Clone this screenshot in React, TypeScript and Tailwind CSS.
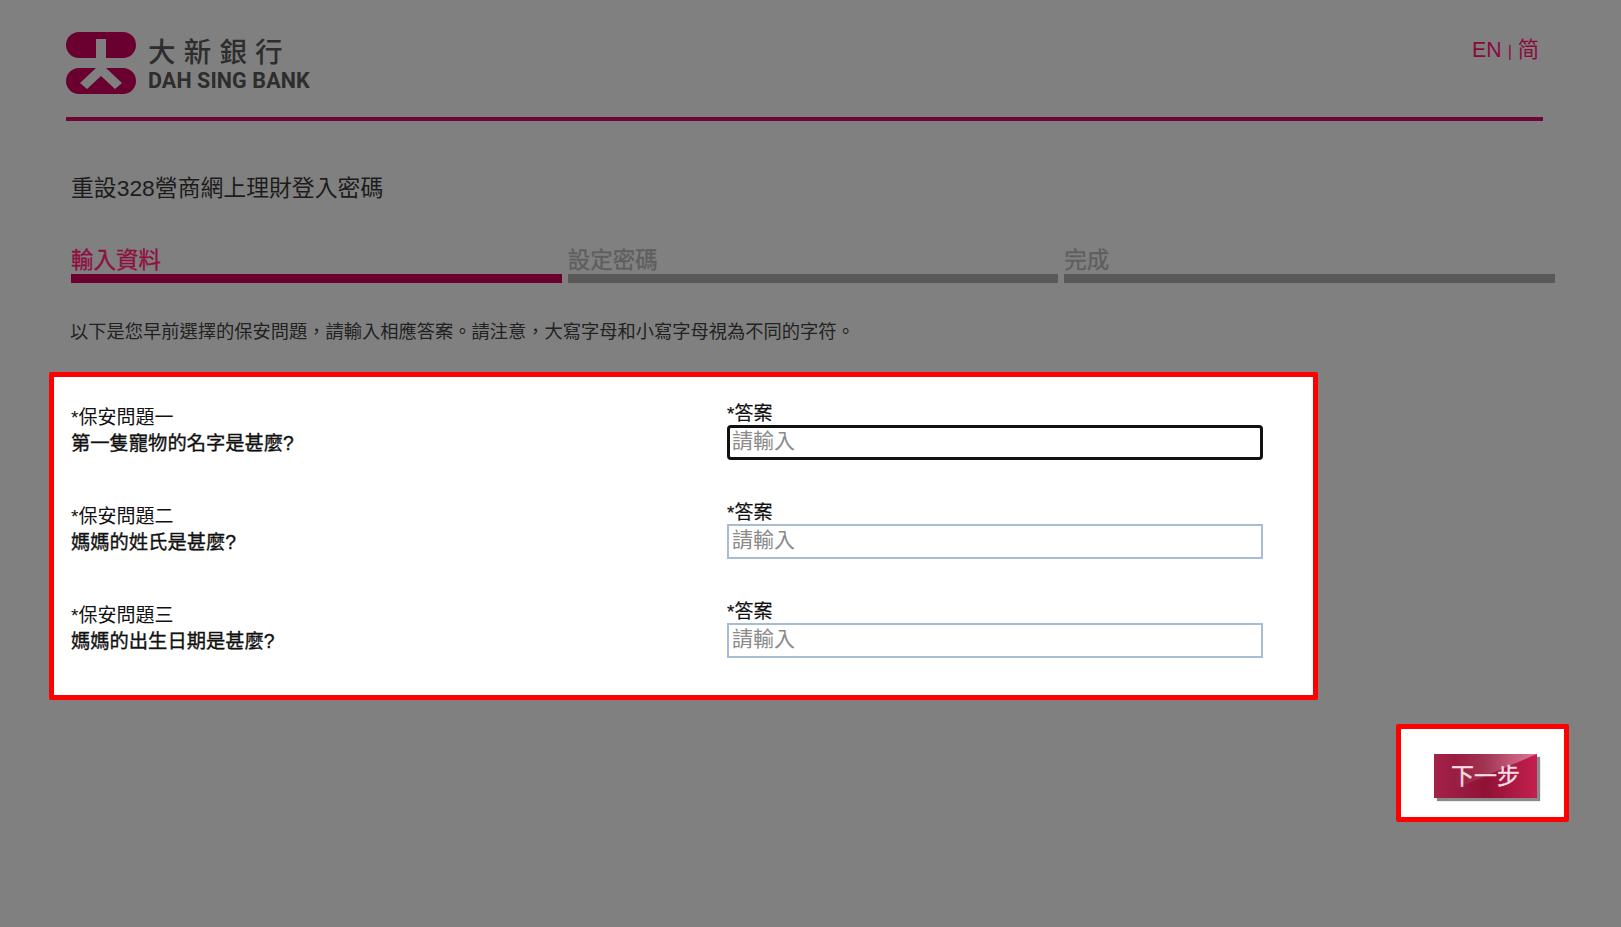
import React from 'react';

const FONT = "font-['Liberation_Sans','Noto_Sans_CJK_TC',sans-serif]";

const STEPS = [
  { label: '輸入資料', active: true },
  { label: '設定密碼', active: false },
  { label: '完成', active: false },
];

const QUESTIONS = [
  { title: '*保安問題一', question: '第一隻寵物的名字是甚麼?', focused: true },
  { title: '*保安問題二', question: '媽媽的姓氏是甚麼?', focused: false },
  { title: '*保安問題三', question: '媽媽的出生日期是甚麼?', focused: false },
];

const Logo = () => (
  <svg width="70" height="62" viewBox="0 0 70 62" className="shrink-0">
    <rect x="0" y="0" width="70" height="26" rx="13" fill="#690030" />
    <rect x="30" y="7" width="10" height="19" fill="#808080" />
    <rect x="0" y="36" width="70" height="26" rx="13" fill="#690030" />
    <polygon points="30,36 14,51 21,57 35,44 49,57 56,51 40,36" fill="#808080" />
  </svg>
);

const QuestionRow = ({ title, question, focused }: { title: string; question: string; focused: boolean }) => (
  <div className="flex h-[99px]">
    <div className="w-[656px] pt-[19px] text-[19px] leading-[26px] text-[#111]">
      <div>{title}</div>
      <div className="text-[19.3px] [-webkit-text-stroke:0.35px_#111]">{question}</div>
    </div>
    <div className="w-[536px] pt-[14px]">
      <div className="h-[25px] pt-[2px] text-[19px] leading-[24px] text-[#111] [-webkit-text-stroke:0.2px_#111]">*答案</div>
      <input
        placeholder="請輸入"
        className={`block h-[35px] w-[536px] bg-white pb-[4px] text-[21px] outline-none placeholder:text-[#8a8a8a] ${
          focused ? 'rounded-[4px] border-[3px] border-[#111] pl-[2px]' : 'border-2 border-[#a9bcd5] pl-[3px]'
        }`}
      />
    </div>
  </div>
);

export default function App() {
  return (
    <div className={`${FONT} h-[927px] w-full overflow-hidden bg-[#808080]`}>
      <header className="ml-[66px] mr-[78px] h-[121px] border-b-4 border-[#6f0535] pt-[32px]">
        <div className="flex items-start justify-between">
          <div className="flex gap-[12px]">
            <Logo />
            <div className="pt-[5px] text-[#2d2d2d]">
              <div className="text-[27.5px] font-medium leading-[32px] tracking-[8.2px]">大新銀行</div>
              <div className="font-['Roboto',sans-serif] text-[21.5px] font-bold leading-[24px] tracking-[0.1px]">DAH SING BANK</div>
            </div>
          </div>
          <div className="mr-[4px] pt-[4px] text-[21.3px] leading-[28px] text-[#8a0a3c]">
            EN <span className="text-[16px]">|</span> 简
          </div>
        </div>
      </header>

      <h1 className="ml-[71px] mt-[52px] text-[22.85px] font-normal leading-[30px] text-[#1c1c1c]">重設328營商網上理財登入密碼</h1>

      <div className="ml-[71px] mr-[66px] mt-[45px] flex gap-[6px]">
        {STEPS.map((step) => (
          <div key={step.label} className="flex-1">
            <div
              className={`text-[22.5px] leading-[26px] [-webkit-text-stroke:0.3px_currentColor] ${
                step.active ? 'text-[#8f0f40]' : 'text-[#5e5e5e]'
              }`}
            >
              {step.label}
            </div>
            <div className={`h-[9px] ${step.active ? 'bg-[#6b0030]' : 'bg-[#595959]'}`} />
          </div>
        ))}
      </div>

      <p className="ml-[70px] mt-[36px] text-[18.25px] leading-[26px] text-[#222]">
        以下是您早前選擇的保安問題，請輸入相應答案。請注意，大寫字母和小寫字母視為不同的字符。
      </p>

      <section className="ml-[49px] mt-[27px] h-[328px] w-[1269px] rounded-[2px] border-[5px] border-[#ff0000] bg-white pl-[17px] pt-[9px]">
        {QUESTIONS.map((q) => (
          <QuestionRow key={q.title} {...q} />
        ))}
      </section>

      <div className="ml-[1396px] mt-[24px] flex h-[98px] w-[173px] items-start rounded-[2px] border-[5px] border-[#ff0000] bg-white pl-[33px] pt-[25px]">
        <button className="relative h-[44px] w-[103px] bg-[linear-gradient(90deg,#a3234a_0%,#8f1235_50%,#c41f4f_100%)] text-[23px] leading-[42px] text-[#f3dbe3] shadow-[3px_3px_1px_#8a8a8a] [-webkit-text-stroke:0.4px_#f3dbe3]">
          <span className="absolute inset-0 bg-[linear-gradient(90deg,rgba(255,255,255,0)_20%,rgba(255,255,255,0.4)_100%)] [clip-path:polygon(0_0,100%_0,0_100%)]" />
          <span className="relative">下一步</span>
        </button>
      </div>
    </div>
  );
}
